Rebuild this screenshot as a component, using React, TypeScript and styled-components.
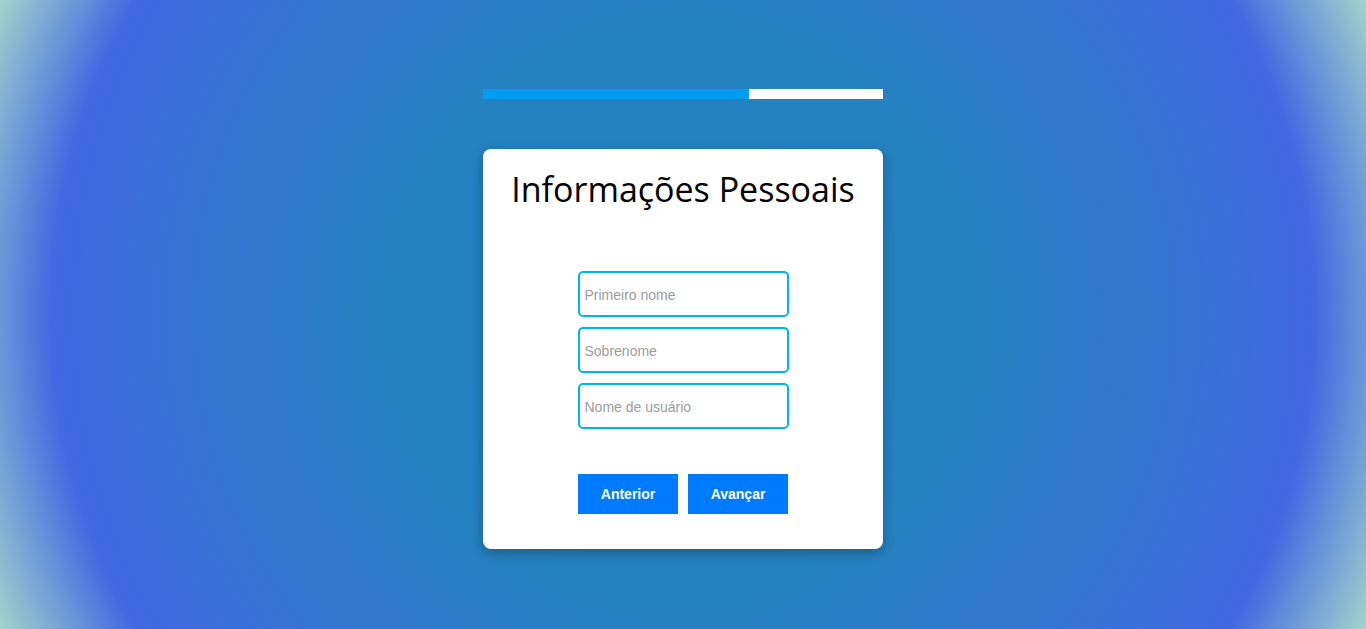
import React from "react";
import styled, { createGlobalStyle } from "styled-components";

const Global = createGlobalStyle`
  html, body { margin: 0; padding: 0; }
  body {
    min-height: 629px;
    font-family: "Liberation Sans", Arial, sans-serif;
    background: radial-gradient(circle farthest-corner at 50% 50%, #2183bc 0%, #2581c0 40%, #4169e1 84%, #a3d4cc 100%);
    background-attachment: fixed;
  }
`;

const Page = styled.div`
  height: 629px;
  display: flex;
  flex-direction: column;
  align-items: center;
  padding-top: 89px;
  box-sizing: border-box;
`;

const Progress = styled.div`
  width: 400px;
  height: 10px;
  background: #ffffff;
  display: flex;
`;

const ProgressFill = styled.div`
  height: 100%;
  background: #039cf5;
`;

const Card = styled.div`
  margin-top: 50px;
  width: 400px;
  height: 400px;
  box-sizing: border-box;
  background: #ffffff;
  border-radius: 8px;
  box-shadow: 0 4px 12px rgba(0, 0, 0, 0.3);
  padding-top: 20px;
  display: flex;
  flex-direction: column;
  align-items: center;
`;

const Title = styled.h2`
  margin: 0;
  font-family: "Open Sans", sans-serif;
  font-weight: 400;
  font-size: 34px;
  line-height: 40px;
  color: #000;
  text-align: center;
`;

const Fields = styled.div`
  margin-top: 62px;
  display: flex;
  flex-direction: column;
  gap: 10px;
`;

const Input = styled.input`
  width: 211px;
  height: 46px;
  box-sizing: border-box;
  border: 2px solid #00b4f0;
  border-radius: 5px;
  padding: 1px 5px 0;
  font-family: "Liberation Sans", Arial, sans-serif;
  font-size: 14px;
  outline: none;
  &::placeholder { color: #9a9a9a; }
`;

const Buttons = styled.div`
  margin-top: 45px;
  display: flex;
  gap: 10px;
`;

const Button = styled.button`
  width: 100px;
  height: 40px;
  border: none;
  background: #007bff;
  color: #fff;
  font-family: "Liberation Sans", Arial, sans-serif;
  font-weight: 700;
  font-size: 14px;
  cursor: pointer;
`;

export default function App() {
  const progress = 66.5;
  return (
    <>
      <Global />
      <Page>
        <Progress>
          <ProgressFill style={{ width: `${progress}%` }} />
        </Progress>
        <Card>
          <Title>Informações Pessoais</Title>
          <Fields>
            <Input placeholder="Primeiro nome" />
            <Input placeholder="Sobrenome" />
            <Input placeholder="Nome de usuário" />
          </Fields>
          <Buttons>
            <Button>Anterior</Button>
            <Button>Avançar</Button>
          </Buttons>
        </Card>
      </Page>
    </>
  );
}
